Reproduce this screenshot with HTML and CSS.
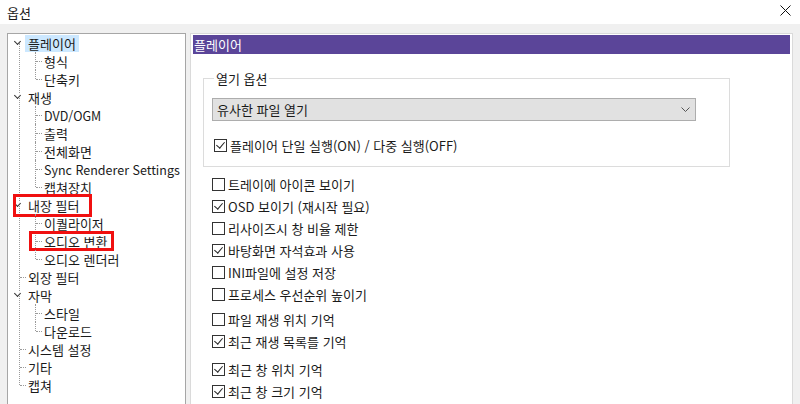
FILE: index.html
```html
<!DOCTYPE html>
<html lang="ko">
<head>
  <meta charset="UTF-8" />
  <title>옵션</title>
  <link rel="stylesheet" href="styles.css">
</head>
<body>

<div class="window">
  <div class="titlebar">
    <span class="title">옵션</span>
    <span class="close">
      <svg width="11" height="11" viewBox="0 0 11 11"><path d="M0.5 0.5 L10.5 10.5 M10.5 0.5 L0.5 10.5" stroke="#111" stroke-width="1" fill="none"/></svg>
    </span>
  </div>

  <div class="body">
    <div class="tree-panel">
      <ul class="tree">
        <li class="node open">
          <div class="row"><span class="label selected">플레이어</span></div>
          <ul class="children">
            <li><div class="row"><span class="label">형식</span></div></li>
            <li><div class="row"><span class="label">단축키</span></div></li>
          </ul>
        </li>
        <li class="node open">
          <div class="row"><span class="label">재생</span></div>
          <ul class="children">
            <li><div class="row"><span class="label latin">DVD/OGM</span></div></li>
            <li><div class="row"><span class="label">출력</span></div></li>
            <li><div class="row"><span class="label">전체화면</span></div></li>
            <li><div class="row"><span class="label latin">Sync Renderer Settings</span></div></li>
            <li><div class="row"><span class="label">캡쳐장치</span></div></li>
          </ul>
        </li>
        <li class="node open">
          <div class="row"><span class="label">내장 필터<span class="mark mark-filter"></span></span></div>
          <ul class="children">
            <li><div class="row"><span class="label">이퀄라이저</span></div></li>
            <li><div class="row"><span class="label">오디오 변환<span class="mark mark-audio"></span></span></div></li>
            <li><div class="row"><span class="label">오디오 렌더러</span></div></li>
          </ul>
        </li>
        <li class="leaf"><div class="row"><span class="label">외장 필터</span></div></li>
        <li class="node open">
          <div class="row"><span class="label">자막</span></div>
          <ul class="children">
            <li><div class="row"><span class="label">스타일</span></div></li>
            <li><div class="row"><span class="label">다운로드</span></div></li>
          </ul>
        </li>
        <li class="leaf"><div class="row"><span class="label">시스템 설정</span></div></li>
        <li class="leaf"><div class="row"><span class="label">기타</span></div></li>
        <li class="leaf last"><div class="row"><span class="label">캡쳐</span></div></li>
      </ul>
    </div>

    <div class="page">
      <div class="page-header">플레이어</div>

      <fieldset class="group">
        <legend>열기 옵션</legend>
        <div class="combo">
          <span>유사한 파일 열기</span>
          <svg width="9" height="5" viewBox="0 0 9 5"><path d="M0.5 0.5 L4.5 4.5 L8.5 0.5" stroke="#555" stroke-width="1" fill="none"/></svg>
        </div>
        <label class="check on">
          <span class="box"></span>플레이어 단일 실행(ON) / 다중 실행(OFF)
        </label>
      </fieldset>

      <div class="options">
        <label class="check"><span class="box"></span>트레이에 아이콘 보이기</label>
        <label class="check on"><span class="box"></span>OSD 보이기 (재시작 필요)</label>
        <label class="check"><span class="box"></span>리사이즈시 창 비율 제한</label>
        <label class="check on"><span class="box"></span>바탕화면 자석효과 사용</label>
        <label class="check"><span class="box"></span>INI파일에 설정 저장</label>
        <label class="check"><span class="box"></span>프로세스 우선순위 높이기</label>
        <label class="check space-sm"><span class="box"></span>파일 재생 위치 기억</label>
        <label class="check on"><span class="box"></span>최근 재생 목록를 기억</label>
        <label class="check on space-lg"><span class="box"></span>최근 창 위치 기억</label>
        <label class="check on"><span class="box"></span>최근 창 크기 기억</label>
      </div>
    </div>
  </div>
</div>

</body>
</html>
```

FILE: styles.css
```css
* { box-sizing: border-box; }

html, body {
  margin: 0;
  height: 100%;
  overflow: hidden;
}

body {
  font-family: "Noto Sans CJK KR", "Noto Sans", sans-serif;
  font-size: 13px;
  color: #1a1a1a;
  background: #f0f0f0;
}

.window {
  height: 100vh;
  display: flex;
  flex-direction: column;
}

.titlebar {
  height: 24px;
  background: #ffffff;
  display: flex;
  align-items: center;
  justify-content: space-between;
  padding: 0 9px 0 7px;
  flex-shrink: 0;
}

.title {
  font-size: 13px;
}

.close {
  display: flex;
  margin-top: -3px;
}

.body {
  flex: 1;
  display: flex;
  gap: 4px;
  padding: 9px 7px 0 7px;
  min-height: 0;
}

/* tree */
.tree-panel {
  width: 179px;
  flex-shrink: 0;
  background: #ffffff;
  border: 1px solid #a6a6a6;
  border-bottom: none;
}

.tree, .children {
  list-style: none;
  margin: 0;
  padding: 0;
}

.tree {
  position: relative;
}

.tree::before {
  content: "";
  position: absolute;
  left: 11px;
  top: 9px;
  bottom: 9px;
  border-left: 1px dotted #9a9a9a;
}

.row {
  height: 18px;
  display: flex;
  align-items: center;
  position: relative;
  padding-left: 17px;
  white-space: nowrap;
}

.label {
  position: relative;
  padding: 0 3px;
  line-height: 17px;
}

.label.latin {
  font-size: 12.5px;
}

.label.selected {
  background: #cce8ff;
}

.node > .row::before {
  content: "";
  position: absolute;
  left: 7px;
  top: 5px;
  width: 4px;
  height: 4px;
  border-right: 1px solid #333;
  border-bottom: 1px solid #333;
  transform: rotate(45deg);
  background: #ffffff;
}

.leaf > .row::before {
  content: "";
  position: absolute;
  left: 12px;
  top: 9px;
  width: 6px;
  border-top: 1px dotted #9a9a9a;
}

.children {
  position: relative;
}

.children > li {
  position: relative;
}

.children > li > .row {
  padding-left: 33px;
}

.children > li::before {
  content: "";
  position: absolute;
  left: 27px;
  top: 0;
  height: 18px;
  border-left: 1px dotted #9a9a9a;
}

.children > li:last-child::before {
  height: 9px;
}

.children > li > .row::after {
  content: "";
  position: absolute;
  left: 28px;
  top: 9px;
  width: 6px;
  border-top: 1px dotted #9a9a9a;
}

/* red annotation boxes */
.mark {
  position: absolute;
  border: 3px solid #f01010;
  pointer-events: none;
}

.mark-filter {
  left: -12px;
  top: -3px;
  width: 79px;
  height: 23px;
}

.mark-audio {
  left: -12px;
  top: -2px;
  width: 85px;
  height: 20px;
}

/* right page */
.page {
  flex: 1;
  background: #ffffff;
  border: 1px solid #dadada;
  border-bottom: none;
  padding: 1px 2px 0 2px;
}

.page-header {
  height: 19px;
  line-height: 19px;
  background: #5b4599;
  color: #ffffff;
  padding-left: 1px;
  font-size: 13px;
}

.group {
  margin: 15px 0 0 10px;
  width: 527px;
  height: 98px;
  border: 1px solid #dcdcdc;
  padding: 10px 0 0 8px;
}

.group legend {
  padding: 0 2px;
  margin-left: 2px;
}

.combo {
  width: 484px;
  height: 23px;
  background: #e1e1e1;
  border: 1px solid #adadad;
  display: flex;
  align-items: center;
  justify-content: space-between;
  padding: 0 5px 0 4px;
}

.check {
  display: flex;
  align-items: center;
  height: 22px;
  white-space: nowrap;
}

.group .check {
  margin-top: 13px;
  padding-left: 2px;
}

.box {
  width: 13px;
  height: 13px;
  border: 1px solid #333;
  background: #fff;
  margin-right: 3px;
  flex-shrink: 0;
  position: relative;
}

.check.on .box::after {
  content: "";
  position: absolute;
  left: 3px;
  top: 0px;
  width: 4px;
  height: 7px;
  border-right: 1px solid #222;
  border-bottom: 1px solid #222;
  transform: rotate(40deg);
}

.options {
  display: flex;
  flex-direction: column;
  padding: 6px 0 0 19px;
}

.space-sm { margin-top: 3px; }
.space-lg { margin-top: 6px; }
```
